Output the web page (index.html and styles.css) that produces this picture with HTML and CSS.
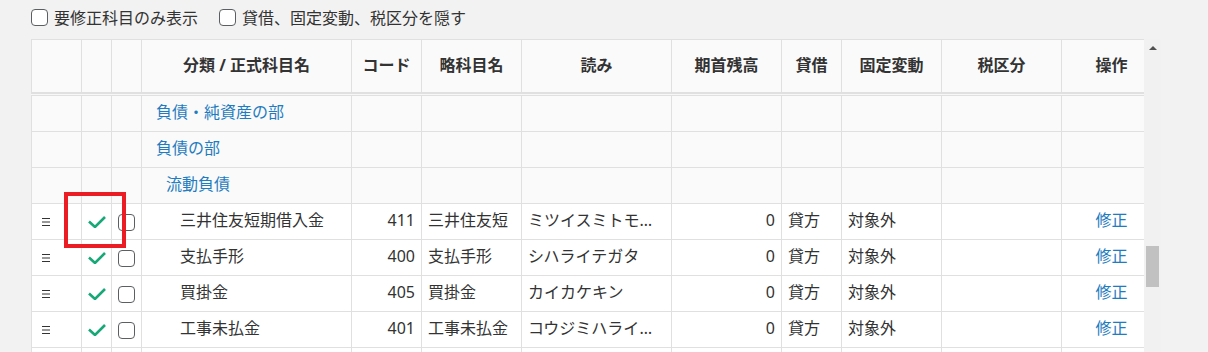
FILE: index.html
```html
<!DOCTYPE html>
<html lang="ja">
<head>
  <meta charset="UTF-8" />
  <title>勘定科目一覧</title>
  <link rel="stylesheet" href="styles.css">
</head>
<body>

  <div class="toolbar">
    <label class="opt"><span class="box"></span>要修正科目のみ表示</label>
    <label class="opt"><span class="box"></span>貸借、固定変動、税区分を隠す</label>
  </div>

  <div class="grid-wrap">
    <div class="tables">
      <table class="head">
        <colgroup>
          <col style="width:50px"><col style="width:30px"><col style="width:30px"><col style="width:210px">
          <col style="width:70px"><col style="width:100px"><col style="width:150px"><col style="width:110px">
          <col style="width:60px"><col style="width:100px"><col style="width:120px"><col style="width:83px">
        </colgroup>
        <tr>
          <th></th><th></th><th></th>
          <th>分類 / 正式科目名</th>
          <th>コード</th>
          <th>略科目名</th>
          <th>読み</th>
          <th>期首残高</th>
          <th>貸借</th>
          <th>固定変動</th>
          <th>税区分</th>
          <th class="ops">操作</th>
        </tr>
      </table>

      <table class="body">
        <colgroup>
          <col style="width:50px"><col style="width:30px"><col style="width:30px"><col style="width:210px">
          <col style="width:70px"><col style="width:100px"><col style="width:150px"><col style="width:110px">
          <col style="width:60px"><col style="width:100px"><col style="width:120px"><col style="width:83px">
        </colgroup>
        <tr class="group">
          <td></td><td></td><td></td>
          <td class="name lv1"><a>負債・純資産の部</a></td>
          <td></td><td></td><td></td><td></td><td></td><td></td><td></td><td></td>
        </tr>
        <tr class="group">
          <td></td><td></td><td></td>
          <td class="name lv1"><a>負債の部</a></td>
          <td></td><td></td><td></td><td></td><td></td><td></td><td></td><td></td>
        </tr>
        <tr class="group">
          <td></td><td></td><td></td>
          <td class="name lv2"><a>流動負債</a></td>
          <td></td><td></td><td></td><td></td><td></td><td></td><td></td><td></td>
        </tr>
        <tr>
          <td class="drag"><svg width="8" height="8" viewBox="0 0 8 8"><path d="M0 0.5h8M0 4h8M0 7.5h8" stroke="#333" stroke-width="1"/></svg></td>
          <td class="ok"><svg width="18" height="12" viewBox="0 0 18 12"><path d="M1 5.5l6 5.5 10-10" fill="none" stroke="#17a878" stroke-width="2.6"/></svg></td>
          <td class="sel"><span class="box"></span></td>
          <td class="name lv3">三井住友短期借入金</td>
          <td class="num">411</td>
          <td>三井住友短</td>
          <td class="cut">ミツイスミトモタンキカリイレキン</td>
          <td class="num">0</td>
          <td>貸方</td>
          <td>対象外</td>
          <td></td>
          <td class="ops"><a>修正</a></td>
        </tr>
        <tr>
          <td class="drag"><svg width="8" height="8" viewBox="0 0 8 8"><path d="M0 0.5h8M0 4h8M0 7.5h8" stroke="#333" stroke-width="1"/></svg></td>
          <td class="ok"><svg width="18" height="12" viewBox="0 0 18 12"><path d="M1 5.5l6 5.5 10-10" fill="none" stroke="#17a878" stroke-width="2.6"/></svg></td>
          <td class="sel"><span class="box"></span></td>
          <td class="name lv3">支払手形</td>
          <td class="num">400</td>
          <td>支払手形</td>
          <td class="cut">シハライテガタ</td>
          <td class="num">0</td>
          <td>貸方</td>
          <td>対象外</td>
          <td></td>
          <td class="ops"><a>修正</a></td>
        </tr>
        <tr>
          <td class="drag"><svg width="8" height="8" viewBox="0 0 8 8"><path d="M0 0.5h8M0 4h8M0 7.5h8" stroke="#333" stroke-width="1"/></svg></td>
          <td class="ok"><svg width="18" height="12" viewBox="0 0 18 12"><path d="M1 5.5l6 5.5 10-10" fill="none" stroke="#17a878" stroke-width="2.6"/></svg></td>
          <td class="sel"><span class="box"></span></td>
          <td class="name lv3">買掛金</td>
          <td class="num">405</td>
          <td>買掛金</td>
          <td class="cut">カイカケキン</td>
          <td class="num">0</td>
          <td>貸方</td>
          <td>対象外</td>
          <td></td>
          <td class="ops"><a>修正</a></td>
        </tr>
        <tr>
          <td class="drag"><svg width="8" height="8" viewBox="0 0 8 8"><path d="M0 0.5h8M0 4h8M0 7.5h8" stroke="#333" stroke-width="1"/></svg></td>
          <td class="ok"><svg width="18" height="12" viewBox="0 0 18 12"><path d="M1 5.5l6 5.5 10-10" fill="none" stroke="#17a878" stroke-width="2.6"/></svg></td>
          <td class="sel"><span class="box"></span></td>
          <td class="name lv3">工事未払金</td>
          <td class="num">401</td>
          <td>工事未払金</td>
          <td class="cut">コウジミハライキン</td>
          <td class="num">0</td>
          <td>貸方</td>
          <td>対象外</td>
          <td></td>
          <td class="ops"><a>修正</a></td>
        </tr>
        <tr>
          <td></td><td></td><td></td><td></td><td></td><td></td>
          <td></td><td></td><td></td><td></td><td></td><td></td>
        </tr>
      </table>
    </div>

    <div class="scrollbar">
      <div class="arrow"></div>
      <div class="thumb"></div>
    </div>
  </div>

  <div class="mark"></div>

</body>
</html>
```

FILE: styles.css
```css
* { box-sizing: border-box; }

html, body {
  margin: 0;
  height: 352px;
  overflow: hidden;
  background-color: #f2f2f2;
  font-family: "Noto Sans", "Noto Sans CJK JP", sans-serif;
  font-size: 16px;
  color: #333;
}

.toolbar {
  display: flex;
  align-items: center;
  height: 35px;
  padding-left: 31px;
}

.opt {
  display: flex;
  align-items: center;
  margin-right: 21px;
  line-height: 20px;
}

.box {
  display: inline-block;
  width: 17px;
  height: 17px;
  border: 1px solid #5c5f62;
  border-radius: 4px;
  background: #fff;
}

.opt .box {
  margin-right: 6px;
}

.grid-wrap {
  display: flex;
  margin: 4px 0 0 31px;
  width: 1130px;
}

.tables {
  width: 1113px;
  background: #f7f7f7;
}

table {
  width: 1113px;
  table-layout: fixed;
  border-collapse: collapse;
}

th, td {
  border-right: 1px solid #e0e0e0;
  border-bottom: 1px solid #e0e0e0;
  padding: 0 6px;
  line-height: 20px;
  white-space: nowrap;
  overflow: hidden;
}

th:first-child, td:first-child {
  border-left: 1px solid #e0e0e0;
}

th:last-child, td:last-child {
  border-right: none;
}

.head {
  border-top: 1px solid #e0e0e0;
  margin-bottom: 1px;
}

.head th {
  height: 53px;
  padding-bottom: 2px;
  background: #fafafa;
  font-weight: bold;
  text-align: center;
  border-bottom: 2px solid #e0e0e0;
}

.head th.ops {
  text-align: right;
  padding-right: 17px;
}

.body {
  border-top: 1px solid #e0e0e0;
}

.body td {
  height: 36px;
  padding-bottom: 2px;
  background: #fff;
}

.body tr.group td {
  background: #fafafa;
}

a {
  color: #1f7cc0;
  cursor: pointer;
}

.name.lv1 { padding-left: 14px; }
.name.lv2 { padding-left: 24px; }
.name.lv3 { padding-left: 38px; }

.num {
  text-align: right;
}

.cut {
  text-overflow: ellipsis;
}

.body td.drag {
  padding: 2px 0 0 10px;
}

.drag svg, .ok svg {
  display: block;
}

.body td.ok {
  padding: 2px 0 0;
}

.ok svg {
  margin: 0 auto;
}

.body td.sel {
  text-align: center;
  padding: 2px 0 0;
}

.sel .box {
  display: block;
  margin: 0 auto;
}

td.ops {
  text-align: right;
  padding-right: 17px;
}

.scrollbar {
  width: 17px;
  height: 320px;
  background: #f1f1f1;
  padding-top: 7px;
}

.arrow {
  width: 0;
  height: 0;
  margin: 0 auto;
  border-left: 4px solid transparent;
  border-right: 4px solid transparent;
  border-bottom: 4px solid #505050;
}

.thumb {
  width: 13px;
  height: 41px;
  margin: 196px auto 0;
  background: #c1c1c1;
}

/* annotation frame over the first check mark */
.mark {
  position: absolute;
  left: 64px;
  top: 192px;
  width: 62px;
  height: 56px;
  border: 4px solid #ec1c24;
}
```
